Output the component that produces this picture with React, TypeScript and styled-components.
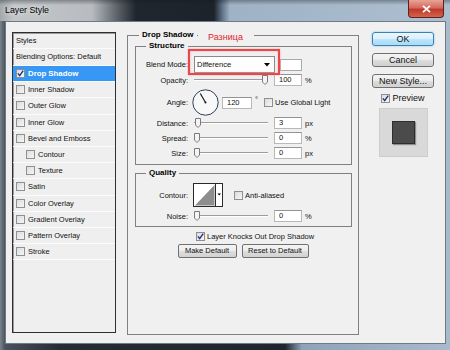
import styled, { createGlobalStyle } from "styled-components";

const GlobalStyle = createGlobalStyle`
  html, body {
    margin: 0;
    padding: 0;
    width: 450px;
    height: 350px;
    overflow: hidden;
    background: #2b3239;
  }
  body {
    font-family: "Liberation Sans", Arial, sans-serif;
    font-size: 7.5px;
    color: #111;
  }
  * {
    box-sizing: border-box;
  }
`;

const effects = [
  { name: "Drop Shadow", checked: true, selected: true },
  { name: "Inner Shadow" },
  { name: "Outer Glow" },
  { name: "Inner Glow" },
  { name: "Bevel and Emboss" },
  { name: "Contour", sub: true },
  { name: "Texture", sub: true },
  { name: "Satin" },
  { name: "Color Overlay" },
  { name: "Gradient Overlay" },
  { name: "Pattern Overlay" },
  { name: "Stroke" },
];

function CheckBox({ checked, size = 9 }: { checked?: boolean; size?: number }) {
  return (
    <Box $size={size}>
      {checked && (
        <svg width={size - 2} height={size - 2} viewBox="0 0 7 7">
          <path d="M0.9 3.4 L2.7 5.6 L6.2 0.7" fill="none" stroke="#1d3380" strokeWidth="1.4" />
        </svg>
      )}
    </Box>
  );
}

function Slider({ pos }: { pos: number }) {
  return (
    <Track>
      <Thumb style={{ left: `calc(${pos} * (100% - 6px))` }}>
        <svg width="6" height="10" viewBox="0 0 6 10">
          <path d="M0.5 0.5 H5.5 V7 L3 9.5 L0.5 7 Z" fill="#f4f4f4" stroke="#7a7a7a" />
        </svg>
      </Thumb>
    </Track>
  );
}

function SliderRow({ label, value, unit, pos, mt }: { label: string; value: string; unit: string; pos: number; mt: number }) {
  return (
    <Row $h={12} $mt={mt}>
      <Label>{label}</Label>
      <Slider pos={pos} />
      <NumField>{value}</NumField>
      <Unit>{unit}</Unit>
    </Row>
  );
}

export default function App() {
  return (
    <>
      <GlobalStyle />
      <Window>
        <TitleBar>
          <Title>Layer Style</Title>
          <CloseButton>
            <svg width="9" height="8" viewBox="0 0 9 8">
              <path d="M1 0.8 L8 7.2 M8 0.8 L1 7.2" stroke="#fff" strokeWidth="1.8" />
            </svg>
          </CloseButton>
        </TitleBar>
        <Frame>
          <Body>
            <StyleList>
              <HeadRow $h={15}>Styles</HeadRow>
              <HeadRow $h={16}>Blending Options: Default</HeadRow>
              {effects.map((e) => (
                <EffectRow key={e.name} $selected={e.selected} $sub={e.sub}>
                  <CheckBox checked={e.checked} />
                  <EffectName>{e.name}</EffectName>
                </EffectRow>
              ))}
            </StyleList>

            <MainGroup>
              <GroupTitle $ml={4}>Drop Shadow</GroupTitle>

              <SubGroup>
                <GroupTitle $ml={10}>Structure</GroupTitle>
                <Row $h={17} $mt={5}>
                  <Label>Blend Mode:</Label>
                  <Annotated>
                    <Dropdown>
                      <span>Difference</span>
                      <svg width="6" height="4" viewBox="0 0 6 4">
                        <path d="M0 0 H6 L3 3.5 Z" fill="#000" />
                      </svg>
                    </Dropdown>
                    <RedFrame />
                    <RedNote>Разница</RedNote>
                  </Annotated>
                  <Swatch />
                </Row>
                <SliderRow label="Opacity:" value="100" unit="%" pos={1} mt={1} />
                <Row $h={27} $mt={3}>
                  <Label $gap={4}>Angle:</Label>
                  <Dial>
                    <svg width="27" height="27" viewBox="0 0 27 27">
                      <circle cx="13.5" cy="13.5" r="12.7" fill="#f8f8f8" stroke="#2c3d57" strokeWidth="1" />
                      <line x1="13.5" y1="13.5" x2="8.3" y2="4.5" stroke="#1a1a1a" strokeWidth="1.2" />
                      <circle cx="13.5" cy="13.5" r="1" fill="#1a1a1a" />
                    </svg>
                  </Dial>
                  <NumField $w={30}>120</NumField>
                  <Degree>°</Degree>
                  <CheckBox />
                  <CheckText>Use Global Light</CheckText>
                </Row>
                <SliderRow label="Distance:" value="3" unit="px" pos={0.02} mt={1} />
                <SliderRow label="Spread:" value="0" unit="%" pos={0} mt={3} />
                <SliderRow label="Size:" value="0" unit="px" pos={0} mt={3} />
              </SubGroup>

              <SubGroup $mt={3} $pb={4}>
                <GroupTitle $ml={10}>Quality</GroupTitle>
                <Row $h={24} $mt={5}>
                  <Label $gap={5}>Contour:</Label>
                  <ContourPicker>
                    <svg width="30" height="24" viewBox="0 0 30 24">
                      <rect x="0.5" y="0.5" width="29" height="23" fill="#fff" stroke="#2a2a2a" />
                      <polygon points="2,22.5 21.5,2 21.5,22.5" fill="#8d8d8d" />
                      <line x1="22.5" y1="0.5" x2="22.5" y2="23.5" stroke="#2a2a2a" />
                      <polygon points="24.4,10.5 28,10.5 26.2,12.6" fill="#000" />
                    </svg>
                  </ContourPicker>
                  <CheckBox />
                  <CheckText>Anti-aliased</CheckText>
                </Row>
                <SliderRow label="Noise:" value="0" unit="%" pos={0} mt={3} />
              </SubGroup>

              <KnockRow>
                <CheckBox checked />
                <CheckText>Layer Knocks Out Drop Shadow</CheckText>
              </KnockRow>
              <ButtonRow>
                <DialogButton $w={59}>Make Default</DialogButton>
                <DialogButton $w={67}>Reset to Default</DialogButton>
              </ButtonRow>
            </MainGroup>

            <SideColumn>
              <SideButton $primary>OK</SideButton>
              <SideButton>Cancel</SideButton>
              <SideButton>New Style...</SideButton>
              <PreviewToggle>
                <CheckBox checked />
                <span>Preview</span>
              </PreviewToggle>
              <PreviewBox>
                <PreviewSwatch />
              </PreviewBox>
            </SideColumn>
          </Body>
        </Frame>
      </Window>
    </>
  );
}

const Window = styled.div`
  width: 450px;
  height: 350px;
  display: flex;
  flex-direction: column;
  background: linear-gradient(90deg, #7a828b 0, #4a525b 5px, #252c34 60px, #1f262e 285px, #8ea3b9 302px, #a9bacb 450px);
`;

const TitleBar = styled.div`
  height: 21px;
  flex: none;
  display: flex;
  align-items: flex-start;
  background:
    linear-gradient(180deg, rgba(20, 25, 30, 0.35) 0, rgba(20, 25, 30, 0) 5px),
    linear-gradient(90deg, #a3a8ad 0, #c3c6c9 14px, #b8bcc0 92px, #60666d 116px, #20262e 136px, #1d232b 214px, #5d7085 222px, #9fb2c6 230px, #adbfcf 450px);
`;

const Title = styled.div`
  padding-left: 5px;
  line-height: 21px;
  font-size: 8.8px;
  color: #000;
  text-shadow: 0 0 4px rgba(255, 255, 255, 0.9);
  flex: 1;
`;

const CloseButton = styled.div`
  width: 36px;
  height: 18px;
  margin-right: 6px;
  display: flex;
  align-items: center;
  justify-content: center;
  border: 1px solid #5e2020;
  border-top: none;
  border-radius: 0 0 4px 4px;
  background: linear-gradient(180deg, #e6a597 0, #d56b5c 45%, #c0392b 56%, #d2654a 100%);
`;

const Frame = styled.div`
  flex: 1;
  display: flex;
  padding: 0 4px 6px 5px;
  min-height: 0;
`;

const Body = styled.div`
  flex: 1;
  display: flex;
  align-items: flex-start;
  background: #f0f0f0;
  border: 1px solid #6f7a87;
`;

const StyleList = styled.div`
  margin: 10px 0 0 6px;
  width: 104px;
  height: 301px;
  flex: none;
  display: flex;
  flex-direction: column;
  border: 1px solid #2f2f2f;
  box-shadow: inset 1px 1px 0 #9a9a9a;
  background: #efefef;
`;

const HeadRow = styled.div<{ $h: number }>`
  height: ${(p) => p.$h + 1}px;
  line-height: ${(p) => p.$h}px;
  padding-left: 3px;
  border-bottom: 1px solid #fbfbfb;
  white-space: nowrap;
`;

const EffectRow = styled.div<{ $selected?: boolean; $sub?: boolean }>`
  height: 16.2px;
  display: flex;
  align-items: center;
  padding-left: ${(p) => (p.$sub ? 13 : 3)}px;
  border-bottom: 1px solid #fbfbfb;
  background: ${(p) => (p.$selected ? "#3797f5" : "transparent")};
  color: ${(p) => (p.$selected ? "#fff" : "#111")};
  font-weight: ${(p) => (p.$selected ? "bold" : "normal")};
  font-size: ${(p) => (p.$selected ? 7.8 : 7.5)}px;
`;

const EffectName = styled.span`
  margin-left: 3px;
  white-space: nowrap;
`;

const Box = styled.span<{ $size: number }>`
  width: ${(p) => p.$size}px;
  height: ${(p) => p.$size}px;
  flex: none;
  display: inline-flex;
  align-items: center;
  justify-content: center;
  border: 1px solid #8e8f8f;
  background: linear-gradient(135deg, #dcdcdc 0, #f6f6f6 100%);
`;

const MainGroup = styled.fieldset`
  position: relative;
  margin: 8px 0 0 11px;
  padding: 1px 6px 0 7px;
  width: 232px;
  height: 305px;
  flex: none;
  border: 1px solid #808080;
  min-width: 0;
`;

const SubGroup = styled.fieldset<{ $mt?: number; $pb?: number }>`
  margin: ${(p) => p.$mt ?? 0}px 0 0 0;
  padding: 0 0 ${(p) => p.$pb ?? 5}px 0;
  border: 1px solid #808080;
  min-width: 0;
`;

const GroupTitle = styled.legend<{ $ml: number }>`
  margin-left: ${(p) => p.$ml}px;
  padding: 0 3px;
  font-weight: bold;
  font-size: 8px;
  line-height: 10px;
  color: #000;
`;

const Row = styled.div<{ $h: number; $mt: number }>`
  display: flex;
  align-items: center;
  height: ${(p) => p.$h}px;
  margin-top: ${(p) => p.$mt}px;
`;

const Label = styled.span<{ $gap?: number }>`
  width: 52px;
  flex: none;
  text-align: right;
  margin-right: ${(p) => p.$gap ?? 6}px;
  white-space: nowrap;
`;

const Annotated = styled.div`
  position: relative;
  flex: none;
`;

const Dropdown = styled.div`
  width: 81px;
  height: 17px;
  display: flex;
  align-items: center;
  justify-content: space-between;
  padding: 0 4px 0 2px;
  background: #fdfdfd;
  border: 1px solid #8a8a8a;
`;

const RedFrame = styled.div`
  position: absolute;
  top: -7px;
  left: -6px;
  right: -5px;
  bottom: -2px;
  border: 2px solid #e8474c;
  box-shadow: 0 0 2px #f6a5a5, inset 0 0 2px #f6a5a5;
`;

const RedNote = styled.div`
  position: absolute;
  top: -25px;
  left: 4px;
  width: 56px;
  padding-left: 10px;
  text-align: left;
  background: #f0f0f0;
  color: #e0262c;
  font-size: 9px;
  line-height: 12px;
  white-space: nowrap;
`;

const Swatch = styled.div`
  width: 22px;
  height: 12px;
  margin-left: 5px;
  flex: none;
  background: #fff;
  border: 1px solid #a9a9a9;
`;

const Track = styled.div`
  position: relative;
  width: 74px;
  height: 12px;
  flex: none;
  margin-right: 6px;

  &::before {
    content: "";
    position: absolute;
    left: 0;
    right: 0;
    top: 5px;
    height: 1px;
    background: #9c9c9c;
    box-shadow: 0 1px 0 #fff;
  }
`;

const Thumb = styled.div`
  position: absolute;
  top: 1px;
  width: 6px;
  height: 10px;
  display: flex;
`;

const NumField = styled.div<{ $w?: number }>`
  width: ${(p) => p.$w ?? 28}px;
  height: 12px;
  flex: none;
  padding-left: 4px;
  line-height: 10px;
  background: #fff;
  border: 1px solid #b8b8b8;
  border-top-color: #939393;
`;

const Unit = styled.span`
  margin-left: 3px;
`;

const Dial = styled.div`
  width: 27px;
  height: 27px;
  flex: none;
  margin-right: 3px;
  display: flex;
`;

const Degree = styled.span`
  margin: 0 6px 6px 3px;
`;

const CheckText = styled.span`
  margin-left: 2px;
  white-space: nowrap;
`;

const ContourPicker = styled.div`
  width: 30px;
  height: 24px;
  flex: none;
  margin-right: 11px;
  display: flex;
`;

const KnockRow = styled.div`
  display: flex;
  align-items: center;
  height: 9px;
  margin: 5px 0 0 61px;
`;

const ButtonRow = styled.div`
  display: flex;
  justify-content: center;
  gap: 5px;
  margin-top: 3px;
  padding-right: 1px;
`;

const DialogButton = styled.div<{ $w: number }>`
  width: ${(p) => p.$w}px;
  height: 14px;
  line-height: 12px;
  text-align: center;
  white-space: nowrap;
  border: 1px solid #707070;
  border-radius: 2px;
  background: linear-gradient(180deg, #f4f4f4 0, #ececec 50%, #dedede 51%, #d2d2d2 100%);
`;

const SideColumn = styled.div`
  margin: 10px 0 0 13px;
  width: 62px;
  flex: none;
  display: flex;
  flex-direction: column;
  align-items: center;
  gap: 7px;
  font-size: 9px;
`;

const SideButton = styled.div<{ $primary?: boolean }>`
  width: 62px;
  height: 14px;
  line-height: 12px;
  text-align: center;
  white-space: nowrap;
  border: 1px solid ${(p) => (p.$primary ? "#3c7fb1" : "#707070")};
  border-radius: 3px;
  background: ${(p) =>
    p.$primary
      ? "linear-gradient(180deg, #eaf6fd 0, #d9f0fc 50%, #bee6fd 51%, #a7d9f5 100%)"
      : "linear-gradient(180deg, #f4f4f4 0, #ebebeb 50%, #dddddd 51%, #cfcfcf 100%)"};
  box-shadow: ${(p) => (p.$primary ? "0 0 2px #5fc3f3, inset 0 0 1px #fff" : "inset 0 0 1px #fff")};
`;

const PreviewToggle = styled.div`
  display: flex;
  align-items: center;
  gap: 2px;
  height: 10px;
  margin-top: -2px;
`;

const PreviewBox = styled.div`
  width: 49px;
  height: 49px;
  margin-top: -2px;
  display: flex;
  align-items: center;
  justify-content: center;
  background: #d9d9d9;
  border: 1px solid #cdcdcd;
`;

const PreviewSwatch = styled.div`
  width: 23px;
  height: 23px;
  background: #4b4b4b;
  border: 1px solid #2e2e2e;
  box-shadow: 1px 1px 1px rgba(0, 0, 0, 0.35);
`;
